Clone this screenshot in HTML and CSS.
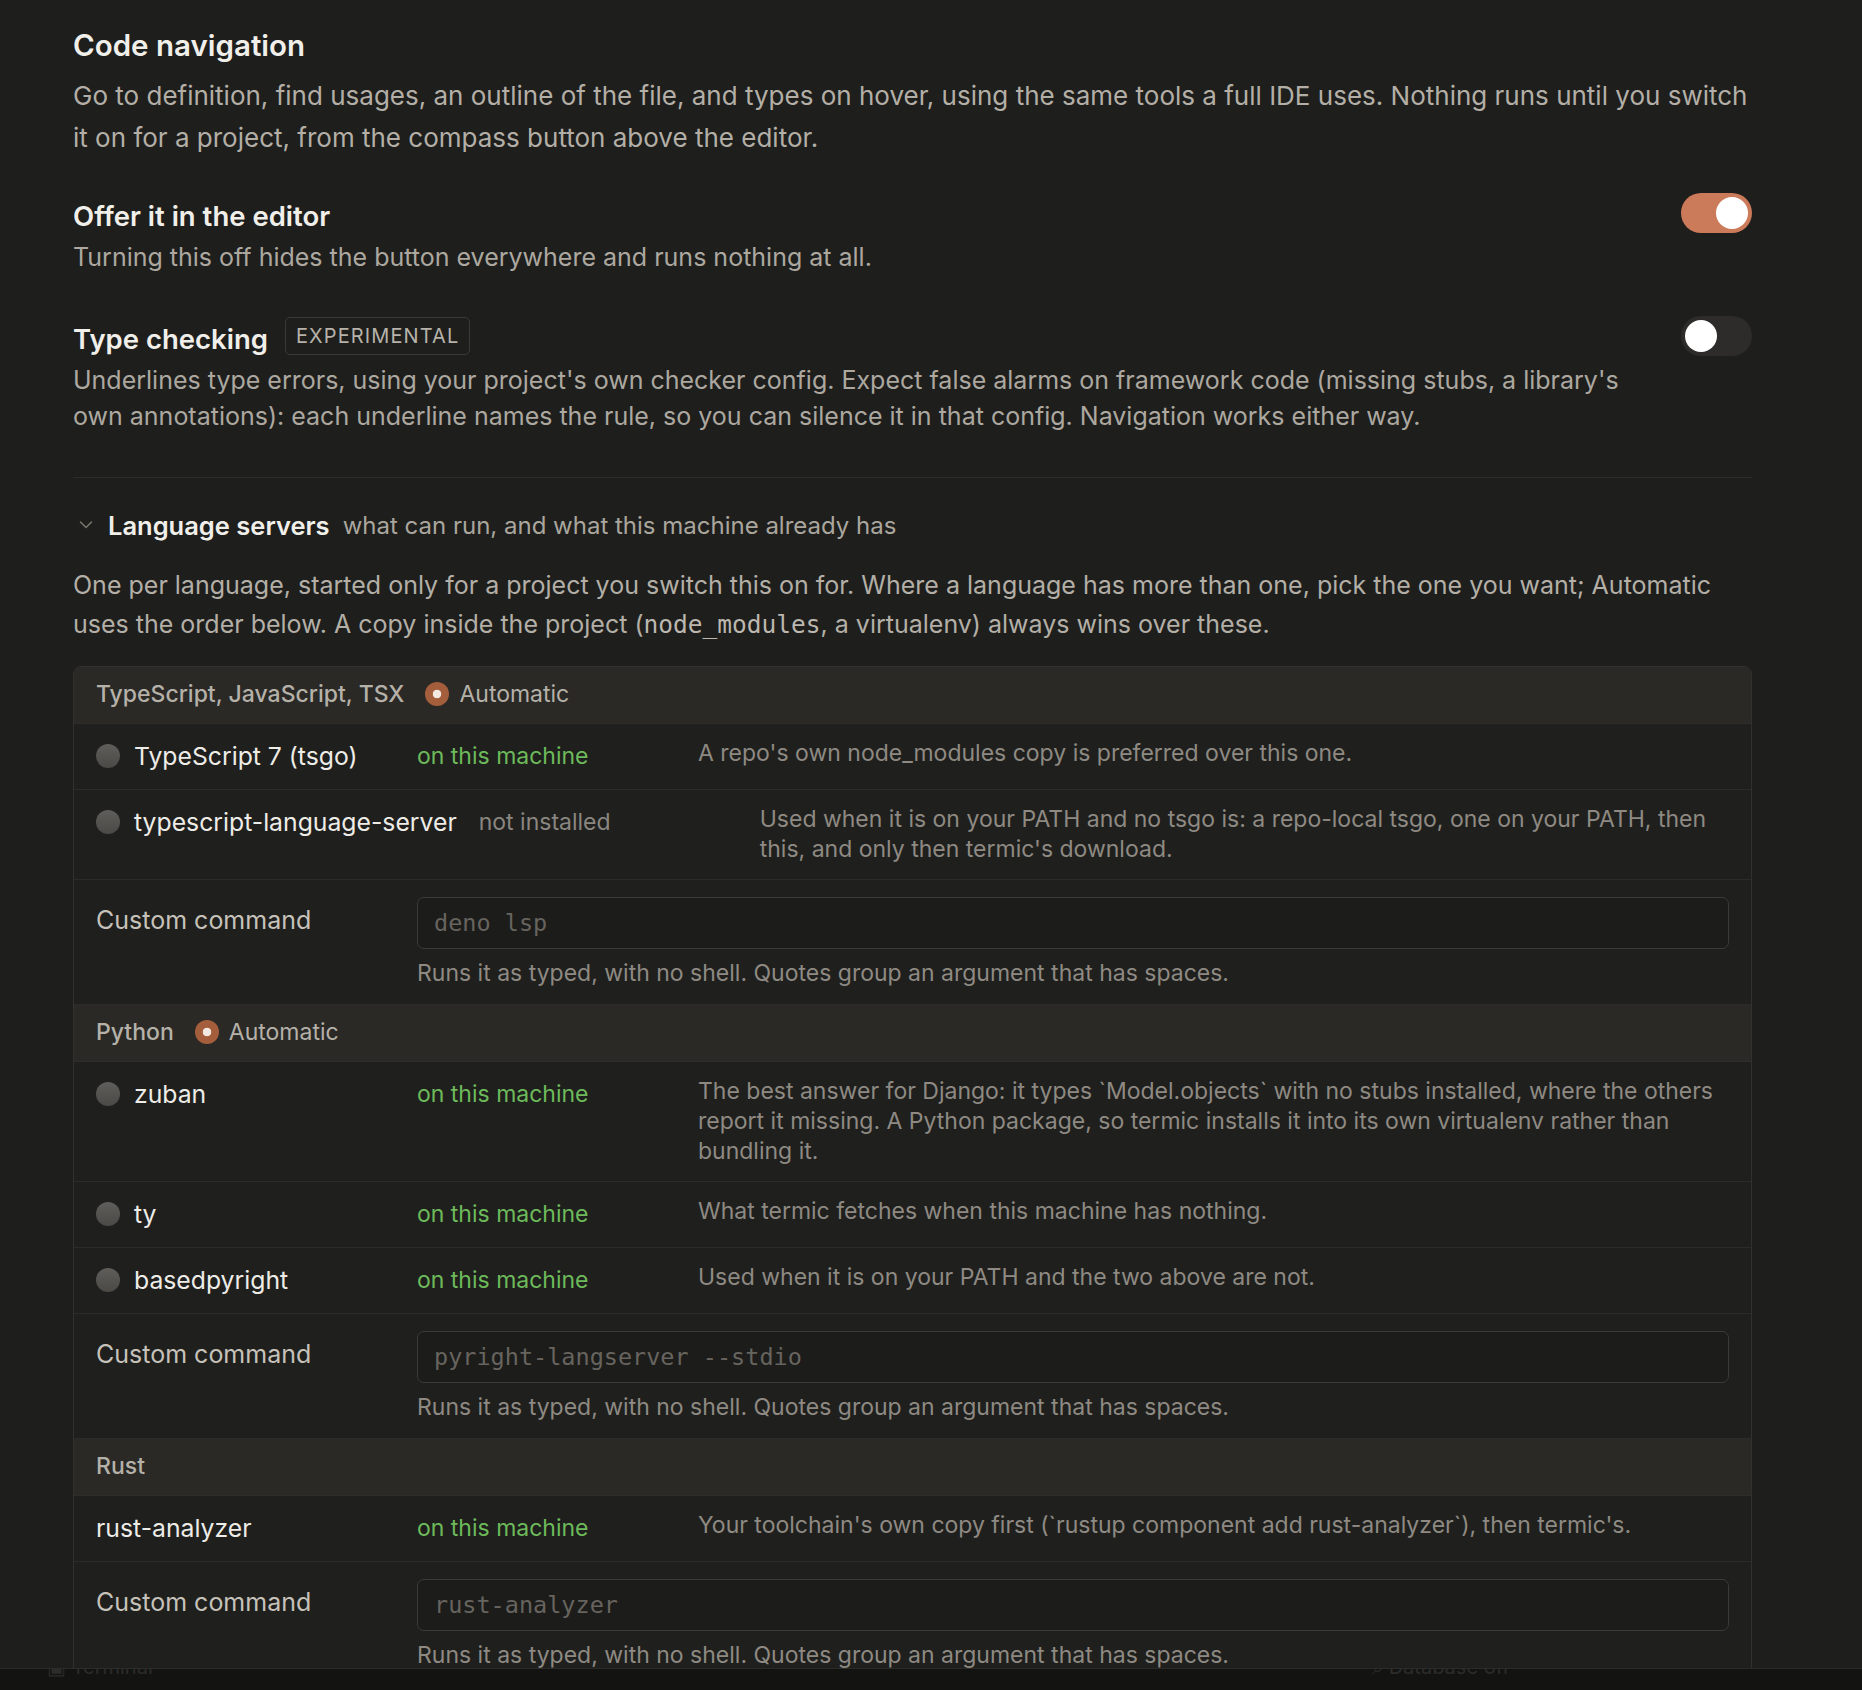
FILE: index.html
```html
<!DOCTYPE html>
<html lang="en">
<head>
<meta charset="utf-8">
<title>Code navigation</title>
<link rel="stylesheet" href="styles.css">
</head>
<body>
<main class="page">
  <h1 class="title">Code navigation</h1>
  <p class="lead">Go to definition, find usages, an outline of the file, and types on hover, using the same tools a full IDE uses. Nothing runs until you switch it on for a project, from the compass button above the editor.</p>

  <section class="setting setting-first">
    <div class="setting-main">
      <div class="setting-head"><h2 class="setting-title">Offer it in the editor</h2></div>
      <p class="setting-desc">Turning this off hides the button everywhere and runs nothing at all.</p>
    </div>
    <div class="toggle on"><span class="knob"></span></div>
  </section>

  <section class="setting">
    <div class="setting-main">
      <div class="setting-head">
        <h2 class="setting-title">Type checking</h2>
        <span class="badge">EXPERIMENTAL</span>
      </div>
      <p class="setting-desc">Underlines type errors, using your project's own checker config. Expect false alarms on framework code (missing stubs, a library's own annotations): each underline names the rule, so you can silence it in that config. Navigation works either way.</p>
    </div>
    <div class="toggle"><span class="knob"></span></div>
  </section>

  <hr class="divider">

  <div class="group-head">
    <svg class="chev" width="14" height="10" viewBox="0 0 14 10"><polyline points="1.5,2 7,7.5 12.5,2" fill="none" stroke="#7a766f" stroke-width="1.5" stroke-linecap="round" stroke-linejoin="round"/></svg>
    <h3 class="group-title">Language servers</h3>
    <span class="group-sub">what can run, and what this machine already has</span>
  </div>
  <p class="group-lead"><span>One per language, started only for a project you switch this on for. Where a language has more than one, pick the one you want; Automatic</span> <span>uses the order below. A copy inside the project (</span><code>node_modules</code><span>, a virtualenv) always wins over these.</span></p>

  <div class="servers">
    <div class="lang-head">
      <span class="lang-name">TypeScript, JavaScript, TSX</span>
      <span class="radio checked"></span>
      <span class="auto">Automatic</span>
    </div>
    <div class="server">
      <div class="server-name"><span class="radio"></span><span class="name">TypeScript 7 (tsgo)</span></div>
      <span class="status ok">on this machine</span>
      <p class="server-desc">A repo's own node_modules copy is preferred over this one.</p>
    </div>
    <div class="server">
      <div class="server-name"><span class="radio"></span><span class="name">typescript-language-server</span></div>
      <span class="status missing">not installed</span>
      <p class="server-desc">Used when it is on your PATH and no tsgo is: a repo-local tsgo, one on your PATH, then this, and only then termic's download.</p>
    </div>
    <div class="custom">
      <span class="custom-label">Custom command</span>
      <div class="custom-field">
        <div class="cmd">deno lsp</div>
        <p class="hint">Runs it as typed, with no shell. Quotes group an argument that has spaces.</p>
      </div>
    </div>

    <div class="lang-head">
      <span class="lang-name">Python</span>
      <span class="radio checked"></span>
      <span class="auto">Automatic</span>
    </div>
    <div class="server">
      <div class="server-name"><span class="radio"></span><span class="name">zuban</span></div>
      <span class="status ok">on this machine</span>
      <p class="server-desc">The best answer for Django: it types `Model.objects` with no stubs installed, where the others report it missing. A Python package, so termic installs it into its own virtualenv rather than bundling it.</p>
    </div>
    <div class="server">
      <div class="server-name"><span class="radio"></span><span class="name">ty</span></div>
      <span class="status ok">on this machine</span>
      <p class="server-desc">What termic fetches when this machine has nothing.</p>
    </div>
    <div class="server">
      <div class="server-name"><span class="radio"></span><span class="name">basedpyright</span></div>
      <span class="status ok">on this machine</span>
      <p class="server-desc">Used when it is on your PATH and the two above are not.</p>
    </div>
    <div class="custom">
      <span class="custom-label">Custom command</span>
      <div class="custom-field">
        <div class="cmd">pyright-langserver --stdio</div>
        <p class="hint">Runs it as typed, with no shell. Quotes group an argument that has spaces.</p>
      </div>
    </div>

    <div class="lang-head">
      <span class="lang-name">Rust</span>
    </div>
    <div class="server">
      <div class="server-name"><span class="name">rust-analyzer</span></div>
      <span class="status ok">on this machine</span>
      <p class="server-desc">Your toolchain's own copy first (`rustup component add rust-analyzer`), then termic's.</p>
    </div>
    <div class="custom">
      <span class="custom-label">Custom command</span>
      <div class="custom-field">
        <div class="cmd">rust-analyzer</div>
        <p class="hint">Runs it as typed, with no shell. Quotes group an argument that has spaces.</p>
      </div>
    </div>
  </div>
</main>

<footer class="statusbar">
  <span class="sb-item sb-left">▣ Terminal</span>
  <span class="sb-item sb-right">⌕ Database off</span>
</footer>
</body>
</html>
```

FILE: styles.css
```css
html, body {
  margin: 0;
  padding: 0;
}
body {
  background: #1e1e1c;
  color: #b3afa7;
  font-family: Inter, "Noto Sans", sans-serif;
  height: 1690px;
  overflow: hidden;
}
.page {
  width: 1679px;
  padding: 27px 0 0 73px;
}
.title {
  margin: 0;
  font-size: 29.5px;
  line-height: 36px;
  font-weight: 600;
  color: #f1efea;
}
.lead {
  margin: 12px 0 0;
  font-size: 26px;
  line-height: 42px;
  color: #b3afa7;
}
.setting {
  display: flex;
  gap: 30px;
  margin-top: 41px;
}
.setting-first {
  margin-top: 34px;
}
.setting-main {
  flex: 1;
  min-width: 0;
}
.setting-head {
  display: flex;
  align-items: center;
  gap: 17px;
  height: 40px;
}
.setting-title {
  margin: 0;
  padding-top: 5px;
  font-size: 27.5px;
  line-height: 34px;
  font-weight: 600;
  color: #f1efea;
}
.setting-desc {
  margin: 6px 0 0;
  font-size: 25px;
  line-height: 36px;
  color: #aca8a0;
}
.badge {
  display: flex;
  align-items: center;
  height: 38px;
  box-sizing: border-box;
  padding: 0 10px;
  border: 1px solid #3b3a37;
  border-radius: 5px;
  font-size: 20px;
  letter-spacing: 1.1px;
  color: #b6b2aa;
}
.toggle {
  flex: none;
  position: relative;
  width: 71px;
  height: 40px;
  border-radius: 20px;
  background: #2d2c2a;
}
.toggle.on {
  background: #cb7a5a;
}
.knob {
  position: absolute;
  top: 4px;
  left: 4px;
  width: 32px;
  height: 32px;
  border-radius: 50%;
  background: #ffffff;
}
.toggle.on .knob {
  left: 35px;
}
.divider {
  margin: 43px 0 0;
  border: 0;
  border-top: 1px solid #2d2c2a;
  height: 0;
}
.group-head {
  display: flex;
  align-items: center;
  height: 36px;
  margin-top: 29px;
}
.chev {
  flex: none;
  margin: 0 15px 0 6px;
}
.group-title {
  margin: 0 13px 0 0;
  font-size: 25.5px;
  font-weight: 600;
  color: #f1efea;
}
.group-sub {
  font-size: 24px;
  color: #aaa69e;
}
.group-lead {
  margin: 23px 0 0;
  font-size: 25px;
  line-height: 39px;
  color: #b3afa7;
}
code {
  font-family: "DejaVu Sans Mono", monospace;
  font-size: 24.5px;
  color: #bcb8b0;
}
.servers {
  margin-top: 22px;
  border: 1px solid #32312e;
  border-radius: 8px;
  overflow: hidden;
  background: #1f1f1d;
}
.lang-head {
  display: flex;
  align-items: center;
  height: 57px;
  box-sizing: border-box;
  padding: 0 22px 3px;
  background: #2a2926;
  border-bottom: 1px solid #2e2d2a;
  font-size: 23px;
  color: #b5b1a9;
}
.lang-name {
  font-weight: 500;
  margin-right: 21px;
}
.auto {
  margin-left: 10px;
}
.radio {
  flex: none;
  width: 24px;
  height: 24px;
  border-radius: 50%;
  background: linear-gradient(#605e5b, #4b4946);
}
.radio.checked {
  background: radial-gradient(circle, #f4e8e3 0 4px, #a45e3c 4.6px);
}
.server {
  display: flex;
  align-items: flex-start;
  gap: 22px;
  padding: 14px 22px 15px;
  border-bottom: 1px solid #2c2b29;
}
.server-name {
  flex: none;
  display: flex;
  align-items: center;
  gap: 14px;
  min-width: 299px;
  height: 36px;
}
.name {
  font-size: 24.75px;
  line-height: 36px;
  color: #eeece7;
}
.status {
  flex: none;
  width: 259px;
  font-size: 23px;
  line-height: 36px;
}
.status.ok {
  color: #6dba5b;
}
.status.missing {
  color: #8a8680;
}
.server-desc {
  flex: 1;
  margin: 0;
  font-size: 23px;
  line-height: 30px;
  color: #8e8a83;
}
.custom {
  display: flex;
  gap: 22px;
  padding: 17px 22px 16px;
  border-bottom: 1px solid #2c2b29;
}
.custom-label {
  flex: none;
  width: 299px;
  font-size: 25px;
  line-height: 46px;
  color: #c6c2ba;
}
.custom-field {
  flex: 1;
}
.cmd {
  display: flex;
  align-items: center;
  height: 52px;
  box-sizing: border-box;
  padding: 0 16px;
  border: 1px solid #3c3b38;
  border-radius: 7px;
  background: #1c1c1a;
  font-family: "DejaVu Sans Mono", monospace;
  font-size: 23.5px;
  color: #67645f;
}
.hint {
  margin: 9px 0 0;
  font-size: 23px;
  line-height: 30px;
  color: #8e8a83;
}
.statusbar {
  position: fixed;
  left: 0;
  right: 0;
  bottom: 0;
  height: 21px;
  background: #131312;
  border-top: 1px solid #2b2b29;
  overflow: hidden;
  font-size: 20px;
  color: #2c2c2a;
}
.sb-item {
  position: absolute;
  top: -14px;
  line-height: 24px;
}
.sb-left {
  left: 47px;
}
.sb-right {
  left: 1372px;
}
```
